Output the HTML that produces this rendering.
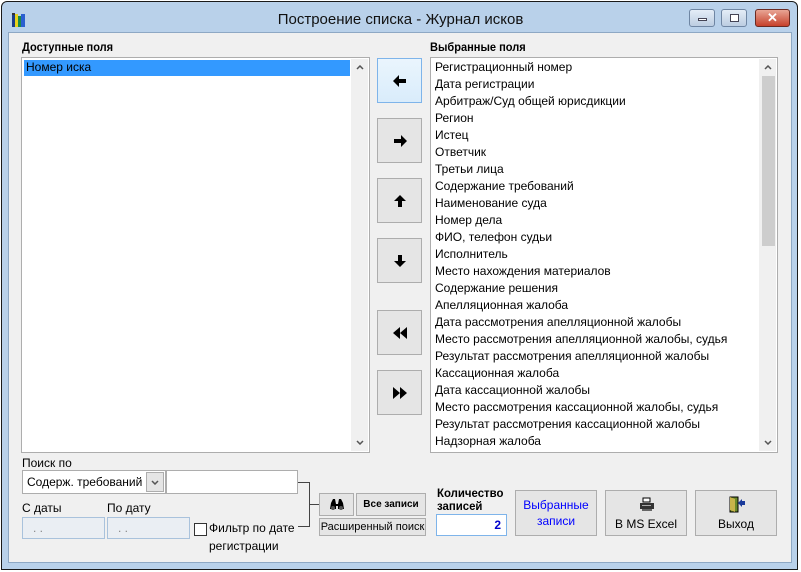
<!DOCTYPE html>
<html><head><meta charset="utf-8"><style>
*{box-sizing:border-box;margin:0;padding:0}
body{width:801px;height:572px;background:#fff;font-family:"Liberation Sans",sans-serif;position:relative;overflow:hidden;font-size:12px;color:#000}
.a{position:absolute}
.win{left:1px;top:1px;width:797px;height:569px;border:1px solid #1a1a1a;border-radius:6px 6px 0 0;background:#b9d1ea}
.client{left:8px;top:32px;width:784px;height:531px;background:#f0f0f0;border:1px solid #8ea8c4}
.title{left:0;top:11px;width:801px;text-align:center;font-size:15px;color:#111}
.lbl{font-size:12px;font-weight:bold;transform:scaleX(.92);transform-origin:left}
.list{background:#fff;border:1px solid #adadad}
.btn{background:#e5e5e5;border:1px solid #adadad;text-align:center}
.btn svg{position:absolute;left:14px;top:14px}
.item{position:absolute;left:4px;font-size:12px;line-height:15px;white-space:nowrap}
.fld{background:#eaeef3;border:1px solid #a9c2dc}
.chev{position:absolute;right:5px}
</style></head><body>
<div class="a win"></div>
<div class="a" style="left:11px;top:12px;width:16px;height:16px">
<svg width="16" height="16"><rect x="1" y="3" width="3" height="12" fill="#1b3d8a"/><rect x="4" y="2" width="3" height="13" fill="#e8d21c"/><rect x="7" y="4" width="3" height="11" fill="#1a8a4a"/><rect x="10" y="2" width="4" height="13" fill="#2a5fd0"/><rect x="1" y="1" width="3" height="2" fill="#333"/></svg></div>
<div class="a title">Построение списка - Журнал исков</div>
<div class="a" style="left:689px;top:9px;width:26px;height:18px;border:1px solid #6f86a3;border-radius:3px;background:linear-gradient(#e4edf7,#bccde1)"><div class="a" style="left:8px;top:8px;width:9px;height:3px;background:#fff;border:1px solid #445"></div></div>
<div class="a" style="left:721px;top:9px;width:26px;height:18px;border:1px solid #6f86a3;border-radius:3px;background:linear-gradient(#e4edf7,#bccde1)"><div class="a" style="left:8px;top:4px;width:9px;height:8px;border:1px solid #445;background:#fff"></div></div>
<div class="a" style="left:755px;top:9px;width:35px;height:18px;border:1px solid #6b2a22;border-radius:3px;background:linear-gradient(#e8a595,#c7412b);color:#fff;font-weight:bold;text-align:center;font-size:13px;line-height:16px">✕</div>
<div class="a client"></div>
<div class="a lbl" style="left:22px;top:40px">Доступные поля</div>
<div class="a lbl" style="left:430px;top:40px">Выбранные поля</div>
<div class="a list" style="left:21px;top:57px;width:349px;height:396px">
<div class="a" style="left:2px;top:2px;width:326px;height:16px;background:#3399ff"></div>
<div class="item" style="left:4px;top:2px">Номер иска</div>
<div class="a" style="right:1px;top:1px;width:17px;height:392px;background:#f0f0f0"></div>
<svg class="chev" style="top:7px" width="8" height="5"><path d="M1 4L4 1L7 4" stroke="#555" stroke-width="1.5" fill="none"/></svg>
<svg class="chev" style="top:382px" width="8" height="5"><path d="M1 1L4 4L7 1" stroke="#555" stroke-width="1.5" fill="none"/></svg>
</div>
<div class="a list" style="left:430px;top:57px;width:348px;height:396px">
<div class="item" style="top:2px">Регистрационный номер</div>
<div class="item" style="top:19px">Дата регистрации</div>
<div class="item" style="top:36px">Арбитраж/Суд общей юрисдикции</div>
<div class="item" style="top:53px">Регион</div>
<div class="item" style="top:70px">Истец</div>
<div class="item" style="top:87px">Ответчик</div>
<div class="item" style="top:104px">Третьи лица</div>
<div class="item" style="top:121px">Содержание требований</div>
<div class="item" style="top:138px">Наименование суда</div>
<div class="item" style="top:155px">Номер дела</div>
<div class="item" style="top:172px">ФИО, телефон судьи</div>
<div class="item" style="top:189px">Исполнитель</div>
<div class="item" style="top:206px">Место нахождения материалов</div>
<div class="item" style="top:223px">Содержание решения</div>
<div class="item" style="top:240px">Апелляционная жалоба</div>
<div class="item" style="top:257px">Дата рассмотрения апелляционной жалобы</div>
<div class="item" style="top:274px">Место рассмотрения апелляционной жалобы, судья</div>
<div class="item" style="top:291px">Результат рассмотрения апелляционной жалобы</div>
<div class="item" style="top:308px">Кассационная жалоба</div>
<div class="item" style="top:325px">Дата кассационной жалобы</div>
<div class="item" style="top:342px">Место рассмотрения кассационной жалобы, судья</div>
<div class="item" style="top:359px">Результат рассмотрения кассационной жалобы</div>
<div class="item" style="top:376px">Надзорная жалоба</div>
<div class="a" style="right:1px;top:1px;width:17px;height:392px;background:#f0f0f0"></div>
<div class="a" style="right:2px;top:18px;width:13px;height:170px;background:#cdcdcd"></div>
<svg class="chev" style="top:7px" width="8" height="5"><path d="M1 4L4 1L7 4" stroke="#555" stroke-width="1.5" fill="none"/></svg>
<svg class="chev" style="top:382px" width="8" height="5"><path d="M1 1L4 4L7 1" stroke="#555" stroke-width="1.5" fill="none"/></svg>
</div>
<div class="a btn" style="left:377px;top:58px;width:45px;height:45px;background:linear-gradient(#eaf5fd,#d9ecfb);border-color:#7eb4ea"><svg width="16" height="16"><path d="M1 8L7 2V6H14V10H7V14Z" fill="#000"/></svg></div>
<div class="a btn" style="left:377px;top:118px;width:45px;height:45px"><svg width="16" height="16"><path d="M15 8L9 2V6H2V10H9V14Z" fill="#000"/></svg></div>
<div class="a btn" style="left:377px;top:178px;width:45px;height:45px"><svg width="16" height="16"><path d="M8 2L2 8H6V14H10V8H14Z" fill="#000"/></svg></div>
<div class="a btn" style="left:377px;top:238px;width:45px;height:45px"><svg width="16" height="16"><path d="M8 14L2 8H6V2H10V8H14Z" fill="#000"/></svg></div>
<div class="a btn" style="left:377px;top:310px;width:45px;height:45px"><svg width="16" height="16"><path d="M1 8L8 2V14ZM8 8L15 2V14Z" fill="#000"/></svg></div>
<div class="a btn" style="left:377px;top:370px;width:45px;height:45px"><svg width="16" height="16"><path d="M15 8L8 2V14ZM8 8L1 2V14Z" fill="#000"/></svg></div>
<div class="a" style="left:22px;top:456px">Поиск по</div>
<div class="a" style="left:22px;top:470px;width:144px;height:24px;background:#fff;border:1px solid #adadad"><span class="a" style="left:4px;top:4px">Содерж. требований</span><div class="a" style="right:1px;top:1px;width:18px;height:20px;background:#e5e5e5;border:1px solid #adadad"><svg class="a" style="left:4px;top:7px" width="8" height="5"><path d="M1 1L4 4L7 1" stroke="#555" stroke-width="1.5" fill="none"/></svg></div></div>
<div class="a" style="left:166px;top:470px;width:132px;height:24px;background:#fff;border:1px solid #adadad"></div>
<div class="a" style="left:298px;top:482px;width:12px;height:45px;border:1px solid #444;border-left:none"></div>
<div class="a" style="left:310px;top:504px;width:9px;height:1px;background:#444"></div>
<div class="a" style="left:22px;top:501px">С даты</div>
<div class="a" style="left:107px;top:501px">По дату</div>
<div class="a fld" style="left:22px;top:517px;width:83px;height:22px;color:#888;padding:3px 10px">.  .</div>
<div class="a fld" style="left:107px;top:517px;width:83px;height:22px;color:#888;padding:3px 10px">.  .</div>
<div class="a" style="left:194px;top:523px;width:13px;height:13px;background:#fff;border:1px solid #333"></div>
<div class="a" style="left:209px;top:521px">Фильтр по дате</div>
<div class="a" style="left:209px;top:539px">регистрации</div>
<div class="a btn" style="left:319px;top:493px;width:35px;height:23px"><svg class="a" style="left:9px;top:4px" width="16" height="13"><path d="M2 5L4 1H6L7 6H9L10 1H12L14 5L15 11H9V8H7V11H1Z" fill="#000"/><circle cx="4" cy="10" r="2" fill="#555"/><circle cx="12" cy="10" r="2" fill="#555"/></svg></div>
<div class="a btn" style="left:356px;top:493px;width:70px;height:23px;font-size:10px;font-weight:bold;line-height:21px">Все записи</div>
<div class="a btn" style="left:319px;top:518px;width:107px;height:18px;font-size:11px;line-height:16px">Расширенный поиск</div>
<div class="a" style="left:437px;top:487px;font-weight:bold;font-size:12px;line-height:13px;transform:scaleX(.95);transform-origin:left">Количество<br>записей</div>
<div class="a" style="left:436px;top:514px;width:71px;height:22px;background:#fff;border:1px solid #7eb4ea;text-align:right;padding:3px 5px;color:#00c;font-weight:bold">2</div>
<div class="a btn" style="left:515px;top:490px;width:82px;height:46px;color:#00f;font-size:12px;line-height:16px;padding-top:6px">Выбранные<br>записи</div>
<div class="a btn" style="left:605px;top:490px;width:82px;height:46px;font-size:12px;padding-top:26px"><svg class="a" style="left:33px;top:6px" width="16" height="15"><path d="M4 1H11V5H4Z" fill="#fff" stroke="#000"/><path d="M1 6H15V12H1Z" fill="#333"/><path d="M3 12H13V14H3Z" fill="#666"/><rect x="3" y="8" width="9" height="1" fill="#aaa"/></svg>В MS Excel</div>
<div class="a btn" style="left:695px;top:490px;width:82px;height:46px;font-size:12px;padding-top:26px"><svg class="a" style="left:33px;top:5px" width="16" height="17"><path d="M1 1H9V16H1Z" fill="#6a8a2a" stroke="#000" stroke-width="1"/><path d="M1 1L6 3V16L1 14Z" fill="#c8b44a"/><path d="M9 7L13 3V5H16V9H13V11Z" fill="#1a3a9a"/></svg>Выход</div>
</body></html>
